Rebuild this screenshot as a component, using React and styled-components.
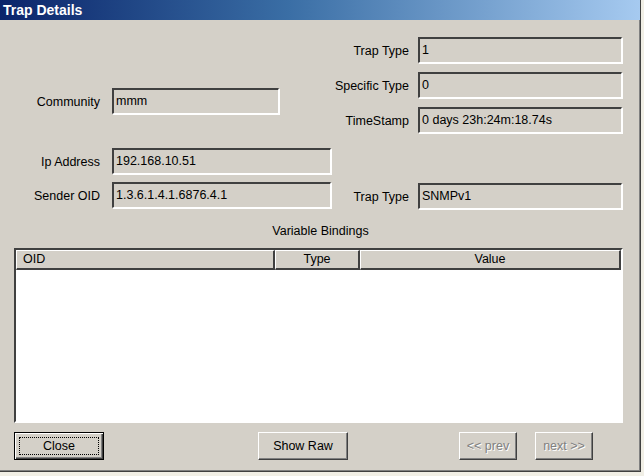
import React from 'react'
import styled, { createGlobalStyle } from 'styled-components'

const GlobalStyle = createGlobalStyle`
  html, body {
    margin: 0;
    padding: 0;
    background: #f1efe6;
  }
  body {
    font-family: "Liberation Sans", Arial, sans-serif;
    font-size: 12.5px;
    color: #000;
  }
`

const leftRows = [
  { label: 'Community', value: 'mmm', top: 68, width: 167 },
  { label: 'Ip Address', value: '192.168.10.51', top: 34, width: 219 },
  { label: 'Sender OID', value: '1.3.6.1.4.1.6876.4.1', top: 8, width: 219 }
]

const rightRows = [
  { label: 'Trap Type', value: '1', top: 17 },
  { label: 'Specific Type', value: '0', top: 9 },
  { label: 'TimeStamp', value: '0 days 23h:24m:18.74s', top: 9 },
  { label: 'Trap Type', value: 'SNMPv1', top: 50 }
]

const App = () => {
  return (
    <>
      <GlobalStyle />
      <Window>
        <TitleBar>Trap Details</TitleBar>
        <Body>
          <Fields>
            <LeftColumn>
              {leftRows.map(row => (
                <Row key={row.label} $top={row.top}>
                  <LeftLabel>{row.label}</LeftLabel>
                  <Field $width={row.width}>{row.value}</Field>
                </Row>
              ))}
            </LeftColumn>
            <RightColumn>
              {rightRows.map((row, i) => (
                <Row key={i} $top={row.top}>
                  <RightLabel>{row.label}</RightLabel>
                  <Field $width={204}>{row.value}</Field>
                </Row>
              ))}
            </RightColumn>
          </Fields>

          <Caption>Variable Bindings</Caption>

          <Table>
            <Header>
              <HeadCell $align="left">OID</HeadCell>
              <HeadCell>Type</HeadCell>
              <HeadCell>Value</HeadCell>
            </Header>
            <TableBody />
          </Table>

          <Buttons>
            <DefaultButton>
              <Focus>Close</Focus>
            </DefaultButton>
            <Button $offset={154} $width={90}>Show Raw</Button>
            <Button $offset={111} $width={58} disabled>&lt;&lt; prev</Button>
            <Button $offset={18} $width={58} disabled>next &gt;&gt;</Button>
          </Buttons>
        </Body>
      </Window>
    </>
  )
}

const Window = styled.div`
  width: 641px;
  height: 472px;
  box-sizing: border-box;
  background: #d4d0c8;
  border-right: 1px solid #404040;
  border-bottom: 1px solid #404040;
  box-shadow: inset -1px -1px 0 #808080;
  display: flex;
  flex-direction: column;
`

const TitleBar = styled.div`
  height: 20px;
  flex: none;
  background: linear-gradient(to right, #0a246a 0%, #3a6ea5 45%, #a6caf0 100%);
  color: #fff;
  font-weight: bold;
  font-size: 14px;
  line-height: 20px;
  padding-left: 3px;
`

const Body = styled.div`
  padding: 0 17px 0 14px;
  display: flex;
  flex-direction: column;
`

const Fields = styled.div`
  display: flex;
`

const LeftColumn = styled.div`
  display: flex;
  flex-direction: column;
  width: 317px;
  flex: none;
`

const RightColumn = styled.div`
  display: flex;
  flex-direction: column;
  flex: none;
`

const Row = styled.div`
  display: flex;
  align-items: center;
  margin-top: ${({ $top }) => $top}px;
`

const LeftLabel = styled.div`
  width: 86px;
  text-align: right;
  margin-right: 12px;
  padding-top: 1px;
  white-space: nowrap;
`

const RightLabel = styled.div`
  width: 78px;
  text-align: right;
  margin-right: 9px;
  padding-top: 1px;
  white-space: nowrap;
`

const Field = styled.div`
  width: ${({ $width }) => $width}px;
  height: 26px;
  box-sizing: border-box;
  border-top: 2px solid #404040;
  border-left: 2px solid #404040;
  border-right: 1px solid #fff;
  border-bottom: 1px solid #fff;
  box-shadow: 1px 1px 0 #fff;
  background: #d4d0c8;
  padding: 0 0 2px 2px;
  display: flex;
  align-items: center;
  white-space: nowrap;
`

const Caption = styled.div`
  text-align: center;
  margin-top: 15px;
  padding-left: 4px;
  height: 14px;
  line-height: 14px;
`

const Table = styled.div`
  margin-top: 10px;
  width: 609px;
  height: 175px;
  box-sizing: border-box;
  border-top: 2px solid #404040;
  border-left: 2px solid #404040;
  border-right: 2px solid #fff;
  border-bottom: 2px solid #fff;
  box-shadow: 1px 1px 0 #d4d0c8;
  background: #fff;
  display: flex;
  flex-direction: column;
`

const Header = styled.div`
  display: grid;
  grid-template-columns: 259px 85px 1fr;
  height: 20px;
  flex: none;
`

const HeadCell = styled.div`
  background: #d4d0c8;
  box-sizing: border-box;
  border-top: 1px solid #fff;
  border-left: 1px solid #fff;
  border-right: 2px solid #404040;
  border-bottom: 2px solid #404040;
  text-align: ${({ $align }) => $align || 'center'};
  padding-left: ${({ $align }) => ($align === 'left' ? '6px' : '0')};
  line-height: 17px;
`

const TableBody = styled.div`
  flex: 1;
  background: #fff;
`

const Buttons = styled.div`
  display: flex;
  margin-top: 9px;
`

const Button = styled.button`
  width: ${({ $width }) => $width}px;
  height: 28px;
  margin-left: ${({ $offset }) => $offset || 0}px;
  padding: 0;
  box-sizing: border-box;
  background: #d4d0c8;
  font-family: "Liberation Sans", Arial, sans-serif;
  font-size: 12.5px;
  color: #000;
  border-top: 1px solid #fff;
  border-left: 1px solid #fff;
  border-right: 1px solid #404040;
  border-bottom: 1px solid #404040;
  box-shadow: inset -1px -1px 0 #808080;

  &:disabled {
    color: #808080;
    text-shadow: 1px 1px 0 #fff;
  }
`

const DefaultButton = styled(Button)`
  width: 90px;
  border: 1px solid #000;
  box-shadow: inset 1px 1px 0 #fff, inset -1px -1px 0 #404040, inset -2px -2px 0 #808080;
  padding: 4px;
`

const Focus = styled.span`
  display: flex;
  align-items: center;
  justify-content: center;
  height: 100%;
  border: 1px dotted #000;
  box-sizing: border-box;
`

export default App
